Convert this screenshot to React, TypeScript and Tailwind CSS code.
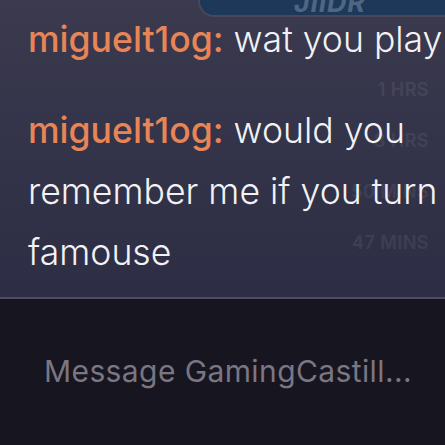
export default function App() {
  return (
    <div className="w-[445px] h-[445px] overflow-hidden flex flex-col font-['Inter','Noto_Sans',sans-serif]">
      {/* chat area */}
      <div className="relative h-[297px] shrink-0 bg-gradient-to-b from-[#3b3a4f] via-[#333349] to-[#2d2d45] overflow-hidden">
        {/* faint stats behind chat */}
        <div className="absolute right-[16px] top-[64px] flex flex-col items-end text-[18px] leading-[51px] font-semibold text-white/[0.07] tracking-wide">
          <span>1 HRS</span>
          <span>8 HRS</span>
          <span>50 MINS</span>
          <span>47 MINS</span>
        </div>

        {/* stream card peeking at top */}
        <div className="flex justify-end h-[19px]">
          <div className="w-[247px] h-[19px] -mt-[2px] rounded-bl-[16px] border-2 border-t-0 border-r-0 border-[#4a4858] bg-[#1d3859] flex items-start pl-[94px] overflow-hidden">
            <span className="text-[27px] leading-[10px] italic font-bold tracking-wide text-[#4e6683]">JIIDR</span>
          </div>
        </div>

        <div className="relative pl-[28px] text-[35.6px] leading-[61px] font-light text-[#f2f2f4] whitespace-nowrap">
          <div className="-mt-[10px]">
            <span className="text-[#e88556] font-medium">miguelt1og:</span> wat you play
          </div>
          <div className="mt-[30px]">
            <div>
              <span className="text-[#e88556] font-medium">miguelt1og:</span> would you
            </div>
            <div>remember me if you turn</div>
            <div>famouse</div>
          </div>
        </div>
      </div>

      {/* input area */}
      <div className="flex-1 border-t-2 border-[#4e4c66] bg-[#17151f] flex items-start pt-[50px] pl-[44px]">
        <span className="text-[30px] tracking-[0.4px] text-[#7a7682] whitespace-nowrap">Message GamingCastill...</span>
      </div>
    </div>
  )
}
